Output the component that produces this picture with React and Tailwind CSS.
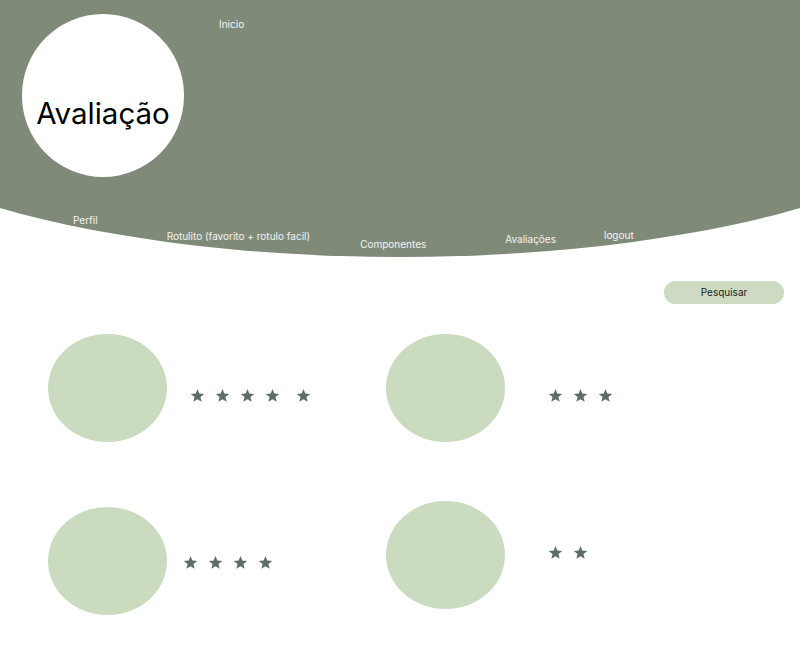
import React from 'react';

// cartões de avaliação (nota = número de estrelas)
const CARDS = [
  { id: 1, rating: 5, starsClass: 'ml-[23px] mt-[14px]', cellClass: '' },
  { id: 2, rating: 3, starsClass: 'ml-[43px] mt-[14px]', cellClass: '' },
  { id: 3, rating: 4, starsClass: 'ml-[16px] mt-[3px]', cellClass: 'mt-[6px]' },
  { id: 4, rating: 2, starsClass: 'ml-[43px] mb-[5px]', cellClass: '' },
];

// links do menu que seguem a curva do cabeçalho
const NAV = [
  { label: 'Perfil', className: 'ml-[73px] mt-[37px]' },
  { label: 'Rotulito (favorito + rotulo facil)', className: 'ml-[69px] mt-[53px]' },
  { label: 'Componentes', className: 'ml-[50px] mt-[61px]' },
  { label: 'Avaliações', className: 'ml-[79px] mt-[56px]' },
  { label: 'logout', className: 'ml-[48px] mt-[52px]' },
];

function Star({ className = '' }) {
  return (
    <svg viewBox="0 0 24 24" className={`w-[15px] h-[15px] ${className}`} fill="#5e6e65">
      <polygon points="12,1.5 14.9,8.9 22.8,9.4 16.7,14.4 18.7,22.1 12,17.8 5.3,22.1 7.3,14.4 1.2,9.4 9.1,8.9" />
    </svg>
  );
}

function NavLink({ children, className = '' }) {
  return (
    <a href="#" className={`text-[10px] leading-[12px] text-white/90 whitespace-nowrap ${className}`}>
      {children}
    </a>
  );
}

export default function App() {
  return (
    <div className="w-[800px] min-h-[668px] bg-white" style={{ fontFamily: 'Inter, "Noto Sans", sans-serif' }}>
      {/* Cabeçalho curvo */}
      <header className="relative h-[258px] overflow-hidden">
        <div className="absolute left-[-200px] top-[-127px] w-[1200px] h-[384px] rounded-[50%] bg-[#7f8a79]" />

        <div className="relative flex flex-col pt-[14px]">
          <div className="flex items-start">
            <div className="ml-[22px] w-[162px] h-[163px] rounded-full bg-white flex items-center justify-center">
              <h1 className="mt-[34px] text-[29.5px] leading-[36px] text-black">Avaliação</h1>
            </div>
            <NavLink className="ml-[35px] mt-[4px]">Inicio</NavLink>
          </div>

          <nav className="flex items-start">
            {NAV.map((item) => (
              <NavLink key={item.label} className={item.className}>{item.label}</NavLink>
            ))}
          </nav>
        </div>
      </header>

      {/* Pesquisa */}
      <div className="flex justify-end pr-[16px] mt-[23px]">
        <button className="w-[120px] h-[23px] rounded-full bg-[#cddbc2] text-[10px] text-[#1c1c1c]">
          Pesquisar
        </button>
      </div>

      {/* Lista de avaliações */}
      <div className="grid grid-cols-[338px_1fr] items-start gap-y-[59px] pl-[48px] mt-[30px]">
        {CARDS.map((card) => (
          <div key={card.id} className={`flex items-center ${card.cellClass}`}>
            <div className="w-[119px] h-[108px] rounded-[50%] bg-[#cadbc0] shrink-0" />
            <div className={`flex gap-[10px] ${card.starsClass}`}>
              {Array.from({ length: card.rating }).map((_, i) => (
                <Star key={i} className={card.rating === 5 && i === 4 ? 'ml-[6px]' : ''} />
              ))}
            </div>
          </div>
        ))}
      </div>
    </div>
  );
}
